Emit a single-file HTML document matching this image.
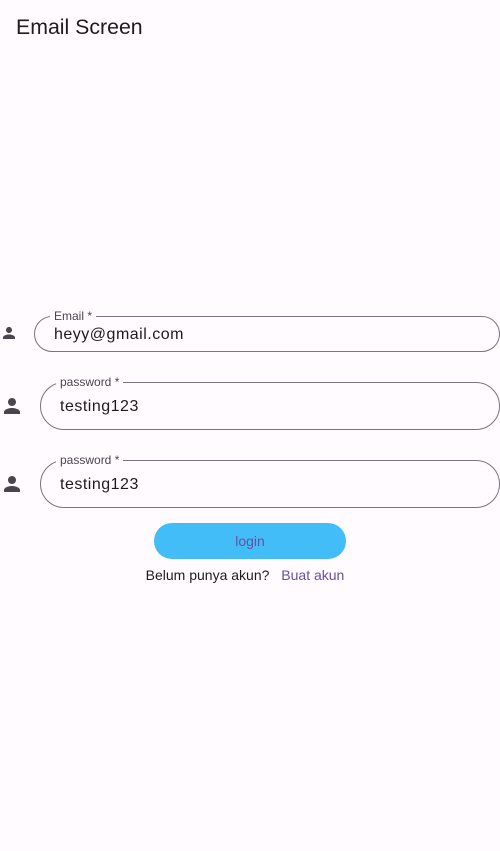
<!DOCTYPE html>
<html><head><style>
body{margin:0;width:500px;height:851px;background:#fffbfe;font-family:"Liberation Sans",sans-serif;position:relative;overflow:hidden;color:#1d1b20}
.t{position:absolute;left:16px;top:15px;font-size:21.3px;color:#1d1b20}
.f{position:absolute;border:1px solid #79747e;box-sizing:border-box}
.lab{position:absolute;top:-9px;font-size:12px;color:#49454f;background:#fffbfe;padding:0 4px;line-height:16px}
.v{position:absolute;font-size:16px;letter-spacing:.5px;color:#1d1b20}
svg{position:absolute;fill:#49454f}
</style></head><body>
<div class="t">Email Screen</div>

<svg style="left:0px;top:324px" width="18" height="18" viewBox="0 0 24 24"><path d="M12 12c2.2 0 4-1.8 4-4s-1.8-4-4-4-4 1.8-4 4 1.8 4 4 4zm0 2c-2.7 0-8 1.3-8 4v2h16v-2c0-2.7-5.3-4-8-4z"/></svg>
<div class="f" style="left:34px;top:316px;width:466px;height:36px;border-radius:18px">
<div class="lab" style="left:15px">Email *</div>
<div class="v" style="left:19px;top:9px">heyy@gmail.com</div></div>

<svg style="left:0px;top:394px" width="24" height="24" viewBox="0 0 24 24"><path d="M12 12c2.2 0 4-1.8 4-4s-1.8-4-4-4-4 1.8-4 4 1.8 4 4 4zm0 2c-2.7 0-8 1.3-8 4v2h16v-2c0-2.7-5.3-4-8-4z"/></svg>
<div class="f" style="left:40px;top:382px;width:460px;height:48px;border-radius:24px">
<div class="lab" style="left:15px">password *</div>
<div class="v" style="left:19px;top:15px">testing123</div></div>

<svg style="left:0px;top:472px" width="24" height="24" viewBox="0 0 24 24"><path d="M12 12c2.2 0 4-1.8 4-4s-1.8-4-4-4-4 1.8-4 4 1.8 4 4 4zm0 2c-2.7 0-8 1.3-8 4v2h16v-2c0-2.7-5.3-4-8-4z"/></svg>
<div class="f" style="left:40px;top:460px;width:460px;height:48px;border-radius:24px">
<div class="lab" style="left:15px">password *</div>
<div class="v" style="left:19px;top:15px">testing123</div></div>

<div style="position:absolute;left:154px;top:523px;width:192px;height:36px;border-radius:18px;background:#42bdf8;color:#6750a4;font-size:14px;text-align:center;line-height:36px">login</div>
<div style="position:absolute;left:-5px;width:500px;top:567px;text-align:center;font-size:14px;color:#1d1b20">Belum punya akun? <span style="color:#6750a4;margin-left:8px">Buat akun</span></div>
</body></html>
